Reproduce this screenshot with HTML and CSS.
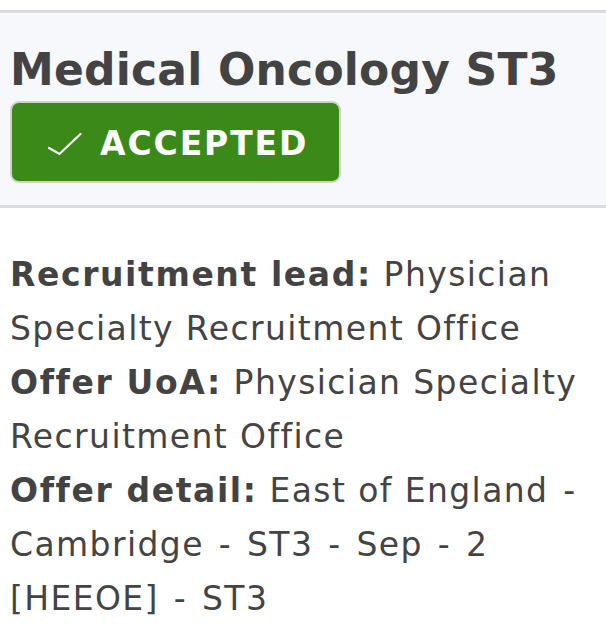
FILE: index.html
```html
<!DOCTYPE html>
<html>
<head>
<meta charset="utf-8">
<link rel="stylesheet" href="styles.css">
</head>
<body>
<div class="page">
  <section class="header">
    <h1 class="title">Medical Oncology ST3</h1>
    <div class="badge">
      <svg class="check" width="34" height="24" viewBox="0 0 34 24" aria-hidden="true">
        <path d="M1 15 L11.5 21 L32.5 1" fill="none" stroke="#ffffff" stroke-width="2.2" stroke-linecap="round" stroke-linejoin="miter"/>
      </svg>
      <span class="badge-text">ACCEPTED</span>
    </div>
  </section>
  <section class="details">
    <p class="row"><strong>Recruitment lead:</strong> Physician Specialty Recruitment Office</p>
    <p class="row"><strong>Offer UoA:</strong> Physician Specialty Recruitment Office</p>
    <p class="row"><strong>Offer detail:</strong> East of England <span class="dash">-</span> Cambridge <span class="dash">-</span> ST3 <span class="dash">-</span> Sep <span class="dash">-</span> 2 [HEEOE] <span class="dash">-</span> ST3</p>
  </section>
</div>
</body>
</html>
```
FILE: styles.css
```css
html, body {
  margin: 0;
  padding: 0;
  background: #ffffff;
}
body {
  font-family: "DejaVu Sans", Verdana, sans-serif;
  color: #444444;
}
.page {
  padding-top: 10px;
}
.header {
  background: #f7f8fc;
  border-top: 3px solid #dcdcdf;
  border-bottom: 3px solid #dcdcdf;
  padding: 30px 10px 22px 10px;
}
.title {
  margin: 0;
  font-size: 44px;
  line-height: 53px;
  font-weight: bold;
  letter-spacing: 0.2px;
  color: #434343;
}
.badge {
  margin-top: 5px;
  display: inline-flex;
  align-items: center;
  box-sizing: border-box;
  width: 331px;
  height: 82px;
  background: #3b8a19;
  border: 2px solid #cdd2cd;
  border-radius: 9px;
  padding: 4px 0 0 36px;
  color: #ffffff;
}
.check {
  display: block;
  margin-right: 18px;
  margin-top: 2px;
}
.badge-text {
  font-size: 33px;
  font-weight: bold;
  line-height: 40px;
  letter-spacing: 1.9px;
}
.details {
  padding: 40px 10px 0 10px;
}
.row {
  margin: 0;
  font-size: 33px;
  line-height: 54px;
  letter-spacing: 1.4px;
}
.row strong {
  font-weight: bold;
  letter-spacing: 1.6px;
  color: #434343;
}
.dash {
  margin: 0 3px;
}
```
